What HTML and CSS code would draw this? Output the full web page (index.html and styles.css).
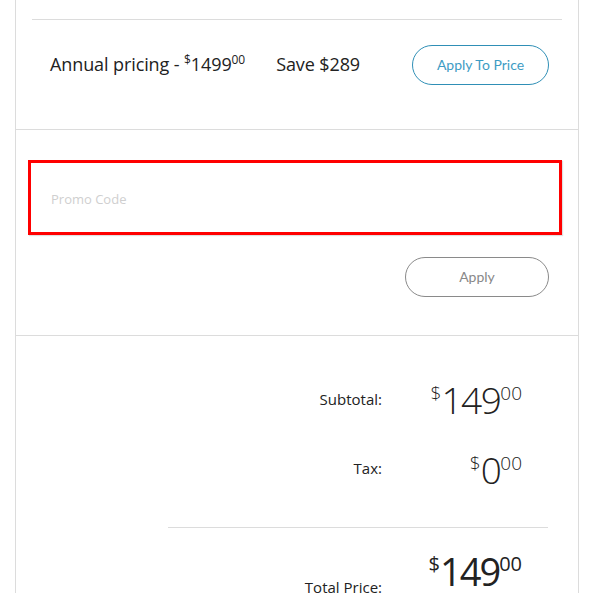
FILE: index.html
```html
<!DOCTYPE html>
<html>
<head>
<meta charset="utf-8">
<link rel="stylesheet" href="styles.css">
</head>
<body>
<div class="card">
  <section class="plan">
    <div class="plan-row">
      <div class="plan-text">Annual pricing - <sup class="cur">$</sup>1499<sup class="cents">00</sup></div>
      <div class="plan-save">Save $289</div>
      <button class="btn btn-teal">Apply To Price</button>
    </div>
  </section>
  <section class="promo">
    <div class="promo-input">Promo Code</div>
    <div class="promo-actions">
      <button class="btn btn-gray">Apply</button>
    </div>
  </section>
  <section class="totals">
    <div class="tot-row sub">
      <span class="tot-label">Subtotal:</span>
      <span class="tot-price"><sup class="p-cur">$</sup>149<sup class="p-cents">00</sup></span>
    </div>
    <div class="tot-row tax">
      <span class="tot-label">Tax:</span>
      <span class="tot-price"><sup class="p-cur">$</sup>0<sup class="p-cents">00</sup></span>
    </div>
    <div class="tot-divider"></div>
    <div class="tot-row total">
      <span class="tot-label">Total Price:</span>
      <span class="tot-price"><sup class="p-cur">$</sup>149<sup class="p-cents">00</sup></span>
    </div>
  </section>
</div>
</body>
</html>
```
FILE: styles.css
```css
html, body {
  margin: 0;
  padding: 0;
  background: #fff;
}
body {
  font-family: "Open Sans", "Noto Sans", sans-serif;
  color: #222;
  overflow: hidden;
}
.card {
  margin-left: 15px;
  width: 562px;
  border-left: 1px solid #dcdcdc;
  border-right: 1px solid #dcdcdc;
  min-height: 593px;
}
.plan {
  padding: 19px 16px 0 16px;
  border-bottom: 1px solid #dcdcdc;
}
.plan-row {
  border-top: 1px solid #dcdcdc;
  height: 110px;
  display: flex;
  align-items: flex-start;
  padding: 24px 13px 0 18px;
  box-sizing: border-box;
}
.plan-text, .plan-save {
  font-size: 18px;
  line-height: 40px;
  color: #222;
  letter-spacing: -0.1px;
}
.plan-save {
  margin-left: 31px;
}
.cur, .cents {
  font-size: 12px;
  line-height: 1;
  vertical-align: 0;
  position: relative;
  top: -7px;
}
.btn {
  font-family: "Lato", "Open Sans", sans-serif;
  background: #fff;
  border-radius: 20px;
  height: 40px;
  font-size: 14px;
  cursor: pointer;
  margin-left: auto;
  padding: 0 0 2px 0;
}
.btn-teal {
  width: 137px;
  border: 1px solid #2f8fb6;
  color: #3d9cc4;
  margin-top: 1px;
}
.btn-gray {
  width: 144px;
  border: 1px solid #8a8a8a;
  color: #888;
}
.promo {
  padding: 30px 16px 38px 12px;
  border-bottom: 1px solid #dcdcdc;
}
.promo-input {
  height: 75px;
  box-sizing: border-box;
  border: 3px solid #ff0000;
  padding-left: 20px;
  padding-top: 2px;
  display: flex;
  align-items: center;
  font-size: 13px;
  color: #cfcfcf;
  box-shadow: 1px 1px 1px rgba(0,0,0,0.12);
}
.promo-actions {
  display: flex;
  margin-top: 22px;
  padding-right: 13px;
}
.totals {
  padding: 42px 30px 0 152px;
}
.tot-row {
  display: flex;
  justify-content: flex-end;
  align-items: flex-start;
  padding-right: 26px;
}
.tot-label {
  font-size: 15px;
  line-height: 20px;
  color: #222;
  margin-top: 11px;
}
.tot-price {
  width: 140px;
  text-align: right;
  font-size: 37px;
  font-weight: 300;
  line-height: 44px;
  letter-spacing: -1.5px;
}
.p-cur, .p-cents {
  font-size: 19px;
  line-height: 1;
  vertical-align: 0;
  position: relative;
  top: -14px;
  letter-spacing: 0;
}
.tax {
  margin-top: 26px;
}
.tax .tot-label {
  margin-top: 10px;
}
.tot-divider {
  height: 1px;
  background: #dcdcdc;
  margin-top: 35px;
}
.total {
  padding-top: 21px;
}
.total .tot-price {
  font-size: 38px;
  font-weight: 400;
  letter-spacing: -2px;
}
.total .p-cur, .total .p-cents {
  font-size: 20px;
  top: -15px;
}
.total .tot-label {
  margin-top: 28px;
}
```
